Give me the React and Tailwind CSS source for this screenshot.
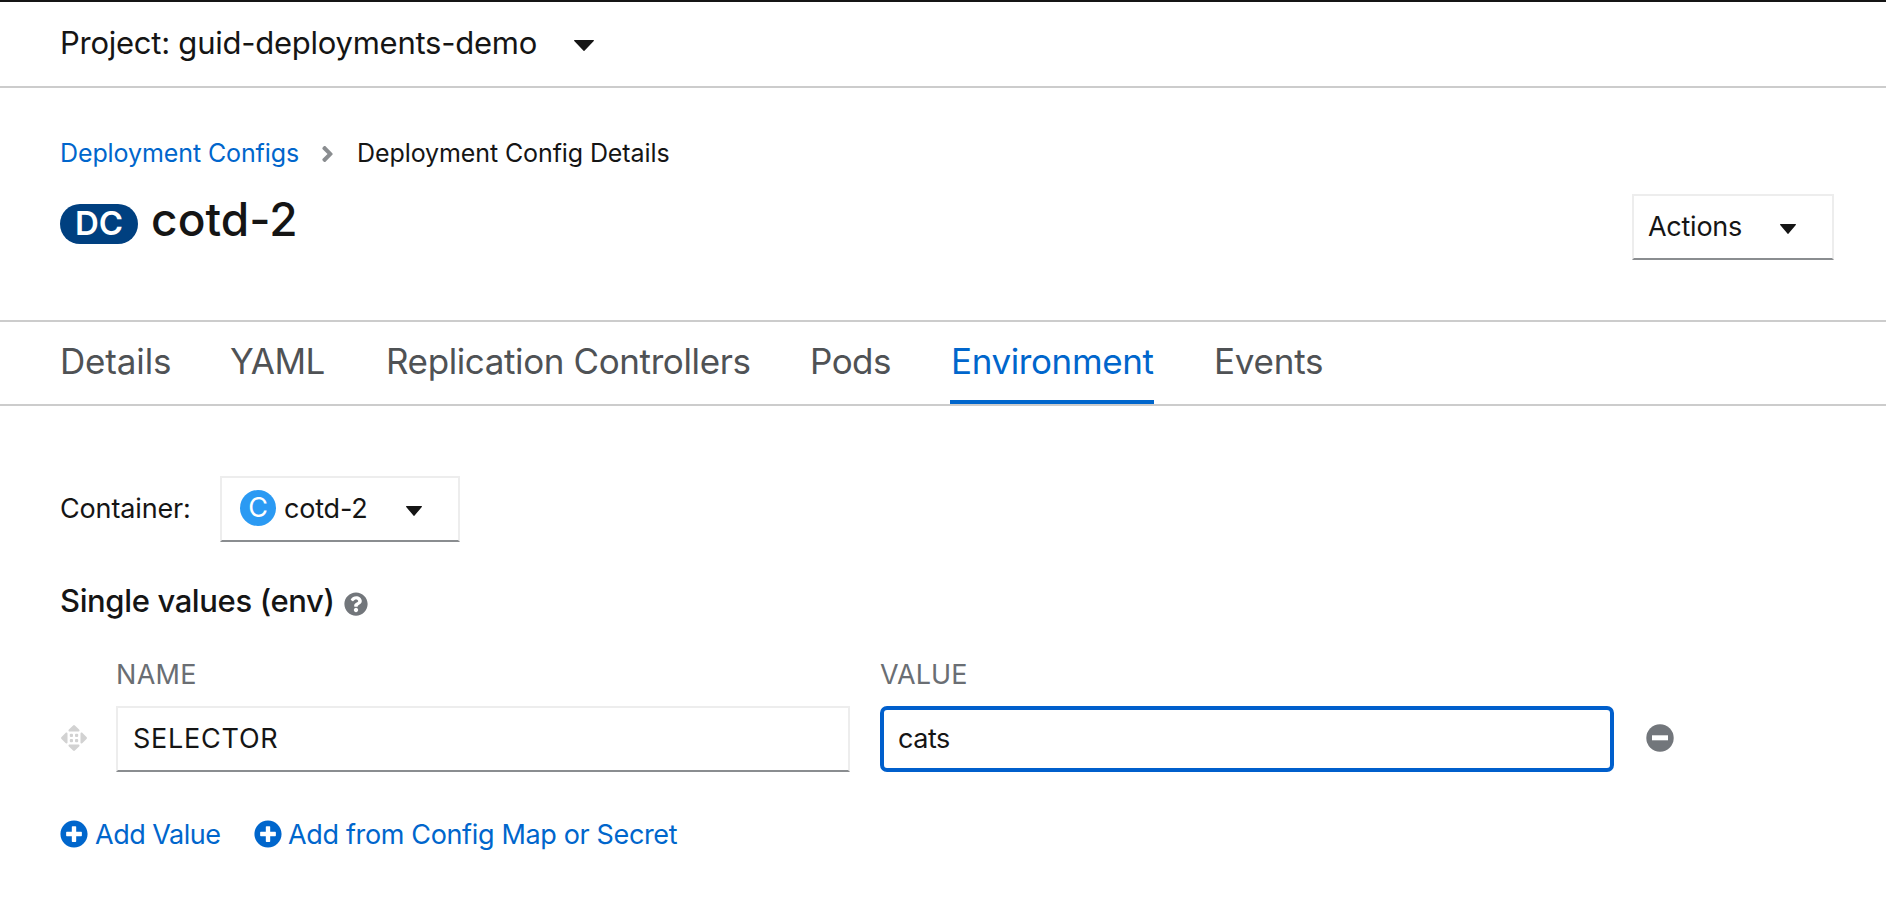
import React from "react";
import { FaPlusCircle, FaQuestionCircle } from "react-icons/fa";

function Caret({ className }) {
  return (
    <svg viewBox="11.3 192 297.3 168.6" preserveAspectRatio="none" fill="currentColor" className={className}>
      <path d="M22 192h276c10 0 14 10 7 17L167 355c-5 5-9 5-14 0L15 209c-7-7-3-17 7-17z" />
    </svg>
  );
}

function Chevron() {
  return (
    <svg viewBox="24 96.7 207.6 318.6" fill="currentColor" className="ml-[23px] h-4 w-[11px] text-[#8a8d90]">
      <path d="M224.3 273l-136 136c-9.4 9.4-24.6 9.4-33.9 0l-22.6-22.6c-9.4-9.4-9.4-24.6 0-33.9l96.4-96.4-96.4-96.4c-9.4-9.4-9.4-24.6 0-33.9L54.3 103c9.4-9.4 24.6-9.4 33.9 0l136 136c9.5 9.4 9.5 24.6.1 34z" />
    </svg>
  );
}

function DragHandle() {
  return (
    <svg viewBox="0 0 26 26" fill="currentColor" className="mb-0.5 ml-px size-[26px] text-[#d2d2d2]">
      <path d="M12.1.5a1.3 1.3 0 0 1 1.8 0l4.2 4c.8.8.4 2-.7 2H8.600c-1.100 0-1.500-1.200-.7-2z" />
      <path d="M12.100 25.500a1.300 1.300 0 0 0 1.800 0l4.200-4c.8-.8.4-2-.7-2H8.600c-1.100 0-1.500 1.200-.7 2z" />
      <path d="M.5 12.100a1.300 1.300 0 0 0 0 1.800l4 4.200c.8.8 2 .4 2-.7V8.600c0-1.100-1.200-1.500-2-.7z" />
      <path d="M25.500 12.100a1.300 1.300 0 0 1 0 1.800l-4 4.200c-.8.8-2 .4-2-.7V8.600c0-1.100 1.200-1.500 2-.7z" />
      <rect x="8.800" y="8.800" width="3.200" height="3.200" rx="1" />
      <rect x="14" y="8.800" width="3.200" height="3.200" rx="1" />
      <rect x="8.800" y="14" width="3.200" height="3.200" rx="1" />
      <rect x="14" y="14" width="3.200" height="3.200" rx="1" />
    </svg>
  );
}

function MinusCircle() {
  return (
    <svg viewBox="0 0 28 28" className="mb-0.5 ml-8 size-7">
      <circle cx="14" cy="14" r="13.700" fill="#72767b" />
      <rect x="6" y="11.300" width="16" height="5" fill="#fff" />
    </svg>
  );
}

const tabs = [
  { label: "Details", className: "w-[110px] border-transparent tracking-[-0.15px] text-[#4f5255]" },
  { label: "YAML", className: "w-[96px] border-transparent tracking-[-0.45px] text-[#4f5255]" },
  { label: "Replication Controllers", className: "w-[364px] border-transparent tracking-[-0.39px] text-[#4f5255]" },
  { label: "Pods", className: "w-[80px] border-transparent tracking-[-0.53px] text-[#4f5255]" },
  { label: "Environment", className: "w-[204px] border-[#06c] pl-px tracking-[-0.39px] text-[#06c]" },
  { label: "Events", className: "w-[110px] border-transparent tracking-[-0.24px] text-[#4f5255]" },
];

const boxBorder = "border-2 border-[#ededed] border-b-[#8a8d90]";

export default function App() {
  return (
    <div className="h-[902px] w-[1886px] overflow-hidden bg-white font-['Inter',sans-serif] whitespace-nowrap text-[#151515]">
      <header className="flex h-[88px] items-center border-t-2 border-b-2 border-t-[#151515] border-b-[#ccc] px-[60px] pb-px">
        <span className="text-[31px] tracking-[-0.25px]">Project: guid-deployments-demo</span>
        <Caret className="mt-[3px] ml-[37px] h-[11px] w-5" />
      </header>

      <section className="flex h-[234px] border-b-2 border-[#ccc] pr-[52px] pl-[60px]">
        <div className="flex-1">
          <nav className="mt-[46px] flex h-10 items-center text-[25px] tracking-[-0.1px]">
            <a className="text-[#06c]">Deployment Configs</a>
            <Chevron />
            <span className="ml-6">Deployment Config Details</span>
          </nav>
          <h1 className="mt-[15px] flex h-[60px] items-start">
            <span className="mt-[15px] flex h-10 w-[78px] items-center justify-center rounded-full bg-[#004080] text-[33px] font-semibold">
              <span className="text-white">DC</span>
            </span>
            <span className="ml-[13px] text-[46px] leading-[60px] font-medium tracking-[0.1px]">cotd-2</span>
          </h1>
        </div>
        <button className={`mt-[106px] flex h-[66px] w-[202px] items-center pl-[14px] text-[27px] tracking-[-0.26px] ${boxBorder}`}>
          <span className="w-[132px] text-left">Actions</span>
          <Caret className="mt-[3px] h-[10px] w-4" />
        </button>
      </section>

      <nav className="flex h-[84px] gap-[60px] border-b-2 border-[#ccc] pl-[60px]">
        {tabs.map((t) => (
          <a key={t.label} className={`h-[82px] shrink-0 border-b-4 text-[35px] leading-[78px] ${t.className}`}>
            {t.label}
          </a>
        ))}
      </nav>

      <main className="pl-[60px]">
        <div className="mt-[70px] flex h-[66px] items-center text-[27px]">
          <span className="w-[160px] tracking-[-0.15px]">Container:</span>
          <button className={`flex h-[66px] w-[240px] items-center pl-[18px] ${boxBorder}`}>
            <span className="mb-0.5 flex size-9 items-center justify-center rounded-full bg-[#2b9af3] text-[27px] text-white">C</span>
            <span className="ml-2 w-[122px] text-left tracking-[-0.2px]">cotd-2</span>
            <Caret className="mt-[3px] h-[10px] w-4" />
          </button>
        </div>

        <h2 className="mt-[39px] flex h-10 items-center">
          <span className="text-[31px] font-medium tracking-[-0.37px]">Single values (env)</span>
          <FaQuestionCircle className="mt-[5px] ml-[9px] size-6 text-[#72767b]" />
        </h2>

        <div className="mt-[34px] flex h-10 items-center pl-14 text-[27px] text-[#6a6e73]">
          <span className="w-[764px] tracking-[0.3px]">NAME</span>
          <span className="tracking-[0.11px]">VALUE</span>
        </div>
        <div className="mt-[11px] flex h-[66px] items-center text-[27px]">
          <DragHandle />
          <div className={`ml-[29px] flex h-[66px] w-[734px] items-center pl-[15px] tracking-[0.75px] ${boxBorder}`}>SELECTOR</div>
          <div className="ml-[30px] flex h-[66px] w-[734px] items-center rounded-[7px] border-4 border-[#005fcc] pl-[14px] tracking-[-0.47px]">
            cats
          </div>
          <MinusCircle />
        </div>

        <div className="mt-[43px] flex h-10 items-center text-[27px] text-[#06c]">
          <a className="flex w-[194px] items-center gap-[7px] tracking-[-0.5px]">
            <FaPlusCircle className="mb-0.5 size-7" />
            Add Value
          </a>
          <a className="flex items-center gap-[6px] tracking-[-0.35px]">
            <FaPlusCircle className="mb-0.5 size-7" />
            Add from Config Map or Secret
          </a>
        </div>
      </main>
    </div>
  );
}
